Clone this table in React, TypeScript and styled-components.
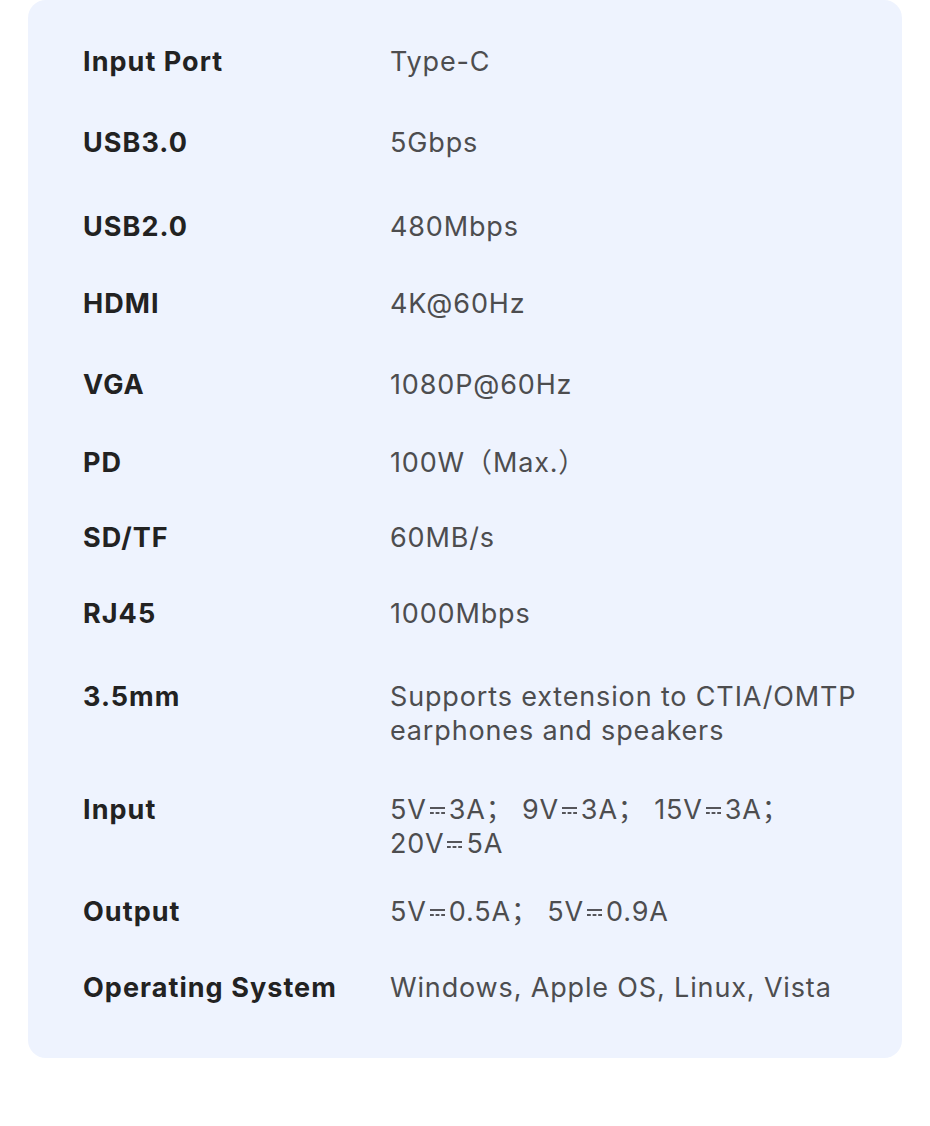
import styled, { createGlobalStyle } from 'styled-components'

// ── Global ────────────────────────────────────────────────
const GlobalStyle = createGlobalStyle`
  html, body { margin: 0; padding: 0; background: #ffffff; }
  body {
    font-family: Inter, "Noto Sans", "Noto Sans CJK SC", sans-serif;
    -webkit-font-smoothing: antialiased;
  }
`

// ── Styled ────────────────────────────────────────────────
const Page = styled.div`
  width: 930px;
  height: 1126px;
  padding: 0 28px;
  box-sizing: border-box;
`

const Card = styled.div`
  background: #eef3fe;
  border-radius: 18px;
  padding: 45px 30px 53px 55px;
  display: flex;
  flex-direction: column;
`

const Row = styled.div<{ $gap: number }>`
  display: grid;
  grid-template-columns: 307px 1fr;
  align-items: start;
  margin-top: ${(p) => p.$gap}px;
  &:first-child { margin-top: 0; }
`

const Label = styled.div`
  font-size: 27px;
  line-height: 34px;
  font-weight: 700;
  color: #222222;
  letter-spacing: 1.05px;
  white-space: nowrap;
`

const Value = styled.div`
  font-size: 27px;
  line-height: 34px;
  font-weight: 400;
  color: #4d4d4f;
  letter-spacing: 0.85px;
  font-family: Inter, "Noto Sans CJK SC", sans-serif;
`

const Line = styled.div`
  white-space: nowrap;
`

const DcMark = styled.svg`
  display: inline-block;
  width: 15px;
  height: 9px;
  margin: 0 4px 0 3px;
  vertical-align: 4px;
`

// ── Icons ─────────────────────────────────────────────────
function Dc() {
  return (
    <DcMark viewBox="0 0 15 9">
      <rect x="0" y="1" width="15" height="2" fill="#55555a" />
      <rect x="0" y="6" width="3.8" height="2" fill="#55555a" />
      <rect x="5.6" y="6" width="3.8" height="2" fill="#55555a" />
      <rect x="11.2" y="6" width="3.8" height="2" fill="#55555a" />
    </DcMark>
  )
}

// ── Data ──────────────────────────────────────────────────
const rows: { label: string; gap: number; lines: React.ReactNode[] }[] = [
  { label: 'Input Port', gap: 0, lines: ['Type-C'] },
  { label: 'USB3.0', gap: 47, lines: ['5Gbps'] },
  { label: 'USB2.0', gap: 50, lines: ['480Mbps'] },
  { label: 'HDMI', gap: 43, lines: ['4K@60Hz'] },
  { label: 'VGA', gap: 47, lines: ['1080P@60Hz'] },
  { label: 'PD', gap: 44, lines: ['100W（Max.）'] },
  { label: 'SD/TF', gap: 41, lines: ['60MB/s'] },
  { label: 'RJ45', gap: 42, lines: ['1000Mbps'] },
  {
    label: '3.5mm',
    gap: 49,
    lines: ['Supports extension to CTIA/OMTP', 'earphones and speakers'],
  },
  {
    label: 'Input',
    gap: 45,
    lines: [
      <>5V<Dc />3A；&nbsp;9V<Dc />3A；&nbsp;15V<Dc />3A；</>,
      <>20V<Dc />5A</>,
    ],
  },
  {
    label: 'Output',
    gap: 34,
    lines: [<>5V<Dc />0.5A；&nbsp;5V<Dc />0.9A</>],
  },
  { label: 'Operating System', gap: 42, lines: ['Windows, Apple OS, Linux, Vista'] },
]

// ── Component ─────────────────────────────────────────────
export default function App() {
  return (
    <>
      <GlobalStyle />
      <Page>
        <Card>
          {rows.map((r) => (
            <Row key={r.label} $gap={r.gap}>
              <Label>{r.label}</Label>
              <Value>
                {r.lines.map((l, i) => (
                  <Line key={i}>{l}</Line>
                ))}
              </Value>
            </Row>
          ))}
        </Card>
      </Page>
    </>
  )
}
